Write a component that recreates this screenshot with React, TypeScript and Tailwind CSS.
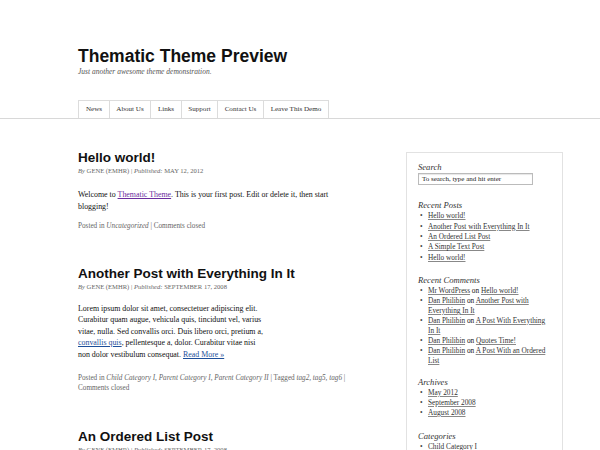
import React from 'react';

const tabs = [
  { label: 'News', w: 'w-[31px]' },
  { label: 'About Us', w: 'w-[41px]' },
  { label: 'Links', w: 'w-[31px]' },
  { label: 'Support', w: 'w-[36px]' },
  { label: 'Contact Us', w: 'w-[46px]' },
  { label: 'Leave This Demo', w: 'w-[66px]' },
];

const recentPosts = [
  'Hello world!',
  'Another Post with Everything In It',
  'An Ordered List Post',
  'A Simple Text Post',
  'Hello world!',
];

const Bullet = () => <span className="w-[10px] shrink-0 pl-[2px] text-[#444]">•</span>;

const SideLink = ({ children }: { children: React.ReactNode }) => (
  <a href="#" className="text-[#333] underline decoration-[#888] underline-offset-[1px]">
    {children}
  </a>
);

const App = () => {
  return (
    <div className="min-h-[450px] bg-white font-['Liberation_Serif',serif] text-[#111]">
      {/* Header */}
      <header>
        <div className="pl-[78px] pt-[46px]">
          <h1 className="font-['Liberation_Sans',sans-serif] text-[17.5px] font-bold leading-[20px] text-[#111]">
            Thematic Theme Preview
          </h1>
          <p className="mt-[1px] text-[7.5px] italic leading-[9px] text-[#555]">
            Just another awesome theme demonstration.
          </p>
        </div>
        <nav className="mt-[24px] border-b border-[#d8d8d8]">
          <ul className="ml-[78px] flex">
            {tabs.map((t, i) => (
              <li
                key={t.label}
                className={`${t.w} flex h-[18px] items-center justify-center border-l border-t border-[#dcdcdc] text-[7.1px] text-[#333] ${
                  i === tabs.length - 1 ? 'border-r' : ''
                }`}
              >
                {t.label}
              </li>
            ))}
          </ul>
        </nav>
      </header>

      <div className="flex pl-[78px]">
        {/* Posts */}
        <main className="w-[285px] pt-[31px]">
          <article>
            <h2 className="font-['Liberation_Sans',sans-serif] text-[13.5px] font-bold leading-[16px] text-[#111]">
              Hello world!
            </h2>
            <p className="text-[6.6px] leading-[10px] text-[#666]">
              <i>By</i> GENE (EMHR) | <i>Published:</i> MAY 12, 2012
            </p>
            <p className="mt-[13px] whitespace-nowrap text-[7.9px] leading-[11.5px]">
              Welcome to{' '}
              <a href="#" className="text-[#6b2e9e] underline">
                Thematic Theme
              </a>
              . This is your first post. Edit or delete it, then start
              <br />
              blogging!
            </p>
            <p className="mt-[10px] text-[7.2px] leading-[9.5px] text-[#666]">
              Posted in <i>Uncategorized</i> | Comments closed
            </p>
          </article>

          <article className="mt-[34px]">
            <h2 className="font-['Liberation_Sans',sans-serif] text-[13.5px] font-bold leading-[16px] text-[#111]">
              Another Post with Everything In It
            </h2>
            <p className="text-[6.6px] leading-[10px] text-[#666]">
              <i>By</i> GENE (EMHR) | <i>Published:</i> SEPTEMBER 17, 2008
            </p>
            <p className="mt-[11px] whitespace-nowrap text-[7.9px] leading-[11.5px]">
              Lorem ipsum dolor sit amet, consectetuer adipiscing elit.
              <br />
              Curabitur quam augue, vehicula quis, tincidunt vel, varius
              <br />
              vitae, nulla. Sed convallis orci. Duis libero orci, pretium a,
              <br />
              <a href="#" className="text-[#1d4f9a] underline">
                convallis quis
              </a>
              , pellentesque a, dolor. Curabitur vitae nisi
              <br />
              non dolor vestibulum consequat.{' '}
              <a href="#" className="text-[#1d4f9a] underline">
                Read More »
              </a>
            </p>
            <p className="mt-[14px] whitespace-nowrap text-[7.2px] leading-[9.5px] text-[#666]">
              Posted in <i>Child Category I, Parent Category I, Parent Category II</i> | Tagged{' '}
              <i>tag2, tag5, tag6</i> |
              <br />
              Comments closed
            </p>
          </article>

          <article className="mt-[36px]">
            <h2 className="font-['Liberation_Sans',sans-serif] text-[13.5px] font-bold leading-[16px] text-[#111]">
              An Ordered List Post
            </h2>
            <p className="text-[6.6px] leading-[10px] text-[#666]">
              <i>By</i> GENE (EMHR) | <i>Published:</i> SEPTEMBER 17, 2008
            </p>
          </article>
        </main>

        {/* Sidebar */}
        <aside className="ml-[43px] mt-[33px] w-[157px] self-start whitespace-nowrap border border-b-0 border-[#e2e2e2] px-[11px] pt-[9px] pb-[20px] text-[7.3px] leading-[10px]">
          <h3 className="text-[8.6px] italic leading-[11px] text-[#333]">Search</h3>
          <div className="flex h-[12px] w-[115px] items-center border border-[#bbb] pl-[3px] text-[7px] text-[#222] shadow-[inset_0_1px_1px_rgba(0,0,0,0.1)]">
            To search, type and hit enter
          </div>

          <h3 className="mt-[15px] text-[8.6px] italic leading-[11px] text-[#333]">Recent Posts</h3>
          <ul>
            {recentPosts.map((p, i) => (
              <li key={i} className="flex h-[10.4px] items-center">
                <Bullet />
                <SideLink>{p}</SideLink>
              </li>
            ))}
          </ul>

          <h3 className="mt-[12px] text-[8.6px] italic leading-[11px] text-[#333]">Recent Comments</h3>
          <ul>
            <li className="flex">
              <Bullet />
              <span>
                <SideLink>Mr WordPress</SideLink> on <SideLink>Hello world!</SideLink>
              </span>
            </li>
            <li className="flex">
              <Bullet />
              <span>
                <SideLink>Dan Philibin</SideLink> on <SideLink>Another Post with</SideLink>
                <br />
                <SideLink>Everything In It</SideLink>
              </span>
            </li>
            <li className="flex">
              <Bullet />
              <span>
                <SideLink>Dan Philibin</SideLink> on <SideLink>A Post With Everything</SideLink>
                <br />
                <SideLink>In It</SideLink>
              </span>
            </li>
            <li className="flex">
              <Bullet />
              <span>
                <SideLink>Dan Philibin</SideLink> on <SideLink>Quotes Time!</SideLink>
              </span>
            </li>
            <li className="flex">
              <Bullet />
              <span>
                <SideLink>Dan Philibin</SideLink> on <SideLink>A Post With an Ordered</SideLink>
                <br />
                <SideLink>List</SideLink>
              </span>
            </li>
          </ul>

          <h3 className="mt-[11px] text-[8.6px] italic leading-[11px] text-[#333]">Archives</h3>
          <ul>
            {['May 2012', 'September 2008', 'August 2008'].map((a) => (
              <li key={a} className="flex">
                <Bullet />
                <SideLink>{a}</SideLink>
              </li>
            ))}
          </ul>

          <h3 className="mt-[13px] text-[8.6px] italic leading-[11px] text-[#333]">Categories</h3>
          <ul>
            <li className="flex">
              <Bullet />
              <SideLink>Child Category I</SideLink>
            </li>
            <li className="flex">
              <Bullet />
              <SideLink>Parent Category I</SideLink>
            </li>
          </ul>
        </aside>
      </div>
    </div>
  );
};

export default App;
